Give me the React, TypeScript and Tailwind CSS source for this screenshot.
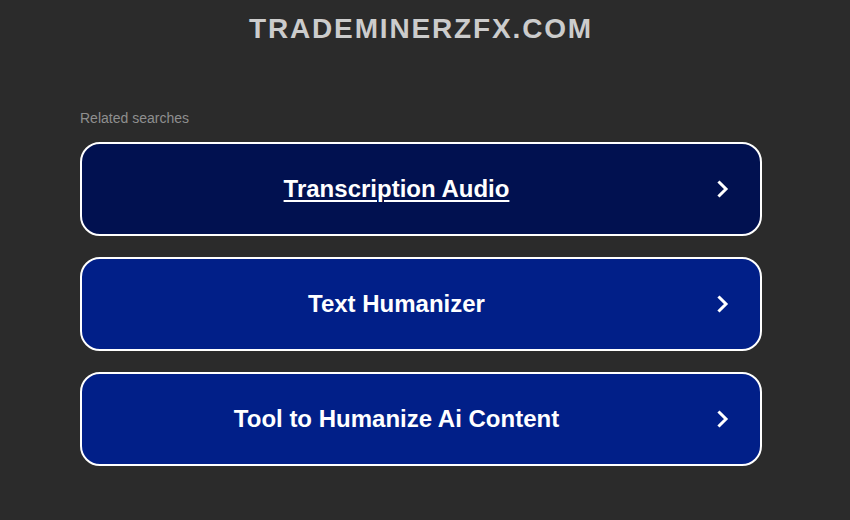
import React from 'react'

const items = [
  { label: 'Transcription Audio', active: true },
  { label: 'Text Humanizer', active: false },
  { label: 'Tool to Humanize Ai Content', active: false },
]

function Chevron() {
  return (
    <svg width="12" height="18" viewBox="0 0 12 18" className="ml-[6px] mr-[31px] shrink-0">
      <path d="M2.5 2.5 L9 9 L2.5 15.5" fill="none" stroke="white" strokeWidth="3" strokeLinecap="square" />
    </svg>
  )
}

export default function App() {
  return (
    <div className="min-h-screen w-full bg-[#2b2b2b] font-['Liberation_Sans',Arial,sans-serif]">
      <div className="w-[842px]">
        <div className="pt-[13px] text-center text-[28px] font-bold leading-[32px] tracking-[1.85px] text-[#cccccc]">
          TRADEMINERZFX.COM
        </div>

        <div className="mx-[80px] mt-[65px]">
          <div className="text-[14px] leading-[17px] text-[#8f8f8f]">Related searches</div>

          <div className="mt-[15px] flex flex-col gap-[21px]">
            {items.map((it) => (
              <a
                key={it.label}
                href="#"
                className={
                  'flex h-[94px] items-center rounded-[20px] border-2 border-white ' +
                  (it.active ? 'bg-[#011150]' : 'bg-[#011f88]')
                }
              >
                <span
                  className={
                    'flex-1 text-center text-[24px] font-bold leading-[28px] text-white ' +
                    (it.active ? 'underline decoration-2 underline-offset-[3px]' : '')
                  }
                >
                  {it.label}
                </span>
                <Chevron />
              </a>
            ))}
          </div>
        </div>
      </div>
    </div>
  )
}
